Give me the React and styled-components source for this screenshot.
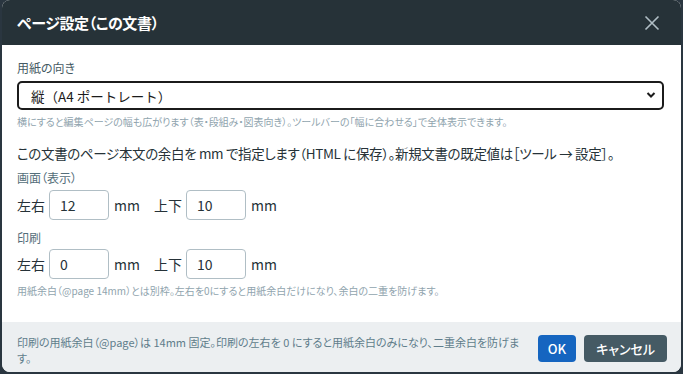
import React from "react";
import styled, { createGlobalStyle } from "styled-components";

const GlobalStyle = createGlobalStyle`
  html, body {
    margin: 0;
    padding: 0;
    background: #2a3640;
  }
  body {
    font-family: "Noto Sans CJK JP", "Noto Sans", sans-serif;
    font-feature-settings: "palt";
  }
  input, button {
    font-feature-settings: "palt";
  }
`;

const Backdrop = styled.div`
  width: 683px;
  height: 374px;
  padding: 0 2px 2px 2px;
  box-sizing: border-box;
  background: #2a3640;
`;

const Dialog = styled.div`
  height: 372px;
  display: flex;
  flex-direction: column;
  background: #ffffff;
  border-radius: 8px;
  overflow: hidden;
`;

const Header = styled.div`
  height: 45px;
  flex: none;
  display: flex;
  align-items: center;
  justify-content: space-between;
  padding: 0 20px 0 15px;
  background: #263238;
`;

const Title = styled.h1`
  margin: 0;
  font-size: 15px;
  letter-spacing: -0.4px;
  font-weight: 700;
  color: #ffffff;
`;

const CloseButton = styled.button`
  border: none;
  background: none;
  padding: 0;
  width: 18px;
  height: 18px;
  display: flex;
  align-items: center;
  justify-content: center;
  cursor: pointer;
`;

const Body = styled.div`
  flex: 1;
  padding: 14px 15px 0 15px;
  display: flex;
  flex-direction: column;
`;

const Label = styled.div`
  font-size: 12px;
  line-height: 17px;
  color: ${(p) => p.color || "#455a64"};
  margin-bottom: ${(p) => p.mb || 4}px;
`;

const SelectWrap = styled.div`
  position: relative;
  height: 29px;
  box-sizing: border-box;
  margin-right: 2px;
  border: 2px solid #1b1b1b;
  border-radius: 5px;
  display: flex;
  align-items: center;
  padding: 0 12px;
  font-size: 13.5px;
  font-feature-settings: normal;
  color: #1b1b1b;
`;

const Chevron = styled.svg`
  position: absolute;
  right: 6px;
  top: 8px;
`;

const Hint = styled.div`
  font-size: 10px;
  line-height: 14px;
  color: #90a4ae;
  margin-top: ${(p) => p.mt || 5}px;
`;

const Paragraph = styled.p`
  margin: 14px 0 6px 0;
  font-size: 13.5px;
  letter-spacing: -0.35px;
  line-height: 20px;
  color: #263238;
`;

const FieldRow = styled.div`
  display: flex;
  align-items: center;
  font-size: 14px;
  color: #263238;
  margin-bottom: ${(p) => p.mb || 0}px;
`;

const FieldName = styled.span`
  margin-right: 4px;
`;

const NumInput = styled.input`
  width: 60px;
  height: 30px;
  box-sizing: border-box;
  border: 1px solid #b0bec5;
  border-radius: 4px;
  padding: 0 10px;
  font-family: inherit;
  font-size: 14px;
  color: #263238;
  background: #fff;
`;

const Unit = styled.span`
  margin: 0 14px 0 5px;
`;

const Footer = styled.div`
  height: 50px;
  flex: none;
  background: #eceff1;
  display: flex;
  align-items: center;
  padding: 0 14px 0 15px;
`;

const FooterNote = styled.div`
  flex: 0 0 504px;
  padding-top: 5px;
  font-size: 11px;
  line-height: 16px;
  color: #607d8b;
`;

const Button = styled.button`
  height: 27px;
  border: none;
  border-radius: 4px;
  padding: 0 ${(p) => (p.primary ? 10 : 12)}px;
  background: ${(p) => (p.primary ? "#1565c0" : "#455a64")};
  color: #ffffff;
  font-family: inherit;
  font-size: 13px;
  font-weight: 500;
  cursor: pointer;
`;

const Buttons = styled.div`
  display: flex;
  gap: 8px;
  margin: 2px 0 0 auto;
`;

export default function App() {
  return (
    <>
      <GlobalStyle />
      <Backdrop>
        <Dialog>
          <Header>
            <Title>ページ設定（この文書）</Title>
            <CloseButton aria-label="閉じる">
              <svg width="16" height="16" viewBox="0 0 16 16">
                <path
                  d="M1.5 1.5 L14.5 14.5 M14.5 1.5 L1.5 14.5"
                  stroke="#b0bec5"
                  strokeWidth="1.6"
                  fill="none"
                />
              </svg>
            </CloseButton>
          </Header>
          <Body>
            <Label mb={5}>用紙の向き</Label>
            <SelectWrap>
              縦（A4 ポートレート）
              <Chevron width="10" height="8" viewBox="0 0 10 8">
                <path d="M1.5 2 L5 5.5 L8.5 2" stroke="#1b1b1b" strokeWidth="2" fill="none" />
              </Chevron>
            </SelectWrap>
            <Hint mt={5}>
              横にすると編集ページの幅も広がります（表・段組み・図表向き）。ツールバーの「幅に合わせる」で全体表示できます。
            </Hint>
            <Paragraph>
              この文書のページ本文の余白を mm で指定します（HTML に保存）。新規文書の既定値は［ツール → 設定］。
            </Paragraph>
            <Label color="#546e7a" mb={4}>画面（表示）</Label>
            <FieldRow mb={9}>
              <FieldName>左右</FieldName>
              <NumInput defaultValue="12" />
              <Unit>mm</Unit>
              <FieldName>上下</FieldName>
              <NumInput defaultValue="10" />
              <Unit>mm</Unit>
            </FieldRow>
            <Label color="#546e7a" mb={3}>印刷</Label>
            <FieldRow>
              <FieldName>左右</FieldName>
              <NumInput defaultValue="0" />
              <Unit>mm</Unit>
              <FieldName>上下</FieldName>
              <NumInput defaultValue="10" />
              <Unit>mm</Unit>
            </FieldRow>
            <Hint mt={5}>
              用紙余白（@page 14mm）とは別枠。左右を0にすると用紙余白だけになり、余白の二重を防げます。
            </Hint>
          </Body>
          <Footer>
            <FooterNote>
              印刷の用紙余白（@page）は 14mm 固定。印刷の左右を 0 にすると用紙余白のみになり、二重余白を防げます。
            </FooterNote>
            <Buttons>
              <Button primary>OK</Button>
              <Button>キャンセル</Button>
            </Buttons>
          </Footer>
        </Dialog>
      </Backdrop>
    </>
  );
}
